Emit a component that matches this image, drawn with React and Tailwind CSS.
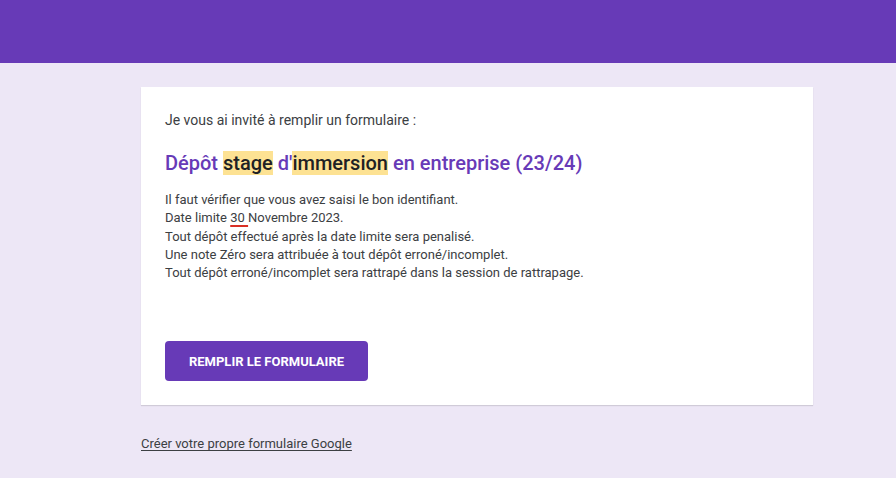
export default function App() {
  return (
    <div className="min-h-screen bg-[#ede7f6] font-['Roboto',_'Liberation_Sans',_sans-serif] text-[#202124]">
      <div className="h-[63px] bg-[#673ab7]" />
      <div className="w-[672px] ml-[141px] pt-[24px]">
        <div className="bg-white px-[24px] pt-[23px] pb-[24px] shadow-[0_1px_1px_rgba(0,0,0,0.12)]">
          <p className="text-[14px] leading-[20px] text-[#3c4043]">Je vous ai invité à remplir un formulaire :</p>
          <h1 className="mt-[20px] text-[20px] leading-[26px] font-medium text-[#673ab7]">
            Dépôt <span className="bg-[#fde293] text-[#202124]">stage</span> d'<span className="bg-[#fde293] text-[#202124]">immersion</span> en entreprise (23/24)
          </h1>
          <div className="mt-[15px] text-[13px] leading-[18.3px] text-[#3c4043]">
            <p>Il faut vérifier que vous avez saisi le bon identifiant.</p>
            <p>
              Date limite <span className="underline decoration-[#d93025] decoration-[2px] underline-offset-[3px]">30 </span>Novembre 2023.
            </p>
            <p>Tout dépôt effectué après la date limite sera penalisé.</p>
            <p>Une note Zéro sera attribuée à tout dépôt erroné/incomplet.</p>
            <p>Tout dépôt erroné/incomplet sera rattrapé dans la session de rattrapage.</p>
          </div>
          <button className="mt-[59px] h-[40px] w-[203px] rounded-[4px] bg-[#673ab7] text-[13px] font-bold text-white">
            REMPLIR LE FORMULAIRE
          </button>
        </div>
        <div className="mt-[26px]">
          <a className="text-[13px] leading-[20px] text-[#3c4043] underline underline-offset-[2px]">Créer votre propre formulaire Google</a>
        </div>
      </div>
    </div>
  );
}
